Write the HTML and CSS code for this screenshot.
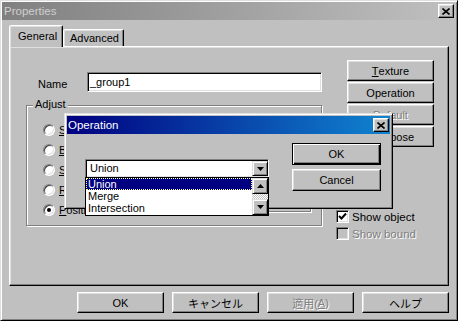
FILE: index.html
```html
<!DOCTYPE html>
<html lang="ja">
<head>
    <meta charset="UTF-8">
    <meta name="viewport" content="width=device-width, initial-scale=1.0">
    <title>Properties</title>
    <link rel="stylesheet" href="styles.css">
</head>
<body>

<div class="window">
    <div class="titlebar inactive">
        <span class="title">Properties</span>
        <span class="tbtn">
            <svg width="8" height="7" viewBox="0 0 8 7"><path d="M0.5 0.5 L7.5 6.5 M7.5 0.5 L0.5 6.5" stroke="#000" stroke-width="1.6" fill="none"/></svg>
        </span>
    </div>

    <div class="tabs">
        <div class="tab active">General</div>
        <div class="tab second">Advanced</div>
    </div>

    <div class="panel">
        <div class="col-left">
            <div class="name-row">
                <span class="name-label">Name</span>
                <div class="field name-field">_group1</div>
            </div>
            <div class="group adjust">
                <span class="legend">Adjust</span>
                <div class="radios">
                    <div class="radio-row"><span class="radio"></span><span><u>S</u>cale</span></div>
                    <div class="radio-row"><span class="radio"></span><span><u>B</u>end</span></div>
                    <div class="radio-row"><span class="radio"></span><span><u>S</u>hear</span></div>
                    <div class="radio-row"><span class="radio"></span><span><u>R</u>otate</span></div>
                    <div class="radio-row"><span class="radio checked"></span><span><u>P</u>osition</span></div>
                </div>
                <div class="group inner"></div>
            </div>
        </div>
        <div class="col-right">
            <button class="btn side"><u>T</u>exture</button>
            <button class="btn side">Operation</button>
            <button class="btn side disabled">Default</button>
            <button class="btn side">Compose</button>
            <div class="checks">
                <div class="check-row">
                    <span class="check">
                        <svg width="9" height="9" viewBox="0 0 9 9"><path d="M1 4 L3.5 6.5 L8 1.5" stroke="#000" stroke-width="2" fill="none"/></svg>
                    </span>
                    <span>Show object</span>
                </div>
                <div class="check-row disabled">
                    <span class="check off"></span>
                    <span>Show bound</span>
                </div>
            </div>
        </div>
    </div>

    <div class="footer">
        <button class="btn">OK</button>
        <button class="btn">キャンセル</button>
        <button class="btn disabled">適用(<u>A</u>)</button>
        <button class="btn">ヘルプ</button>
    </div>

    <!-- Operation dialog on top -->
    <div class="dialog">
        <div class="titlebar active">
            <span class="title">Operation</span>
            <span class="tbtn">
                <svg width="8" height="7" viewBox="0 0 8 7"><path d="M0.5 0.5 L7.5 6.5 M7.5 0.5 L0.5 6.5" stroke="#000" stroke-width="1.6" fill="none"/></svg>
            </span>
        </div>
        <div class="dialog-body">
            <div class="combo">
                <div class="field combo-field">
                    <span>Union</span>
                    <span class="arrow-btn">
                        <svg width="7" height="4" viewBox="0 0 7 4"><polygon points="0,0 7,0 3.5,4" fill="#000"/></svg>
                    </span>
                </div>
                <div class="droplist">
                    <div class="items">
                        <div class="item selected">Union</div>
                        <div class="item">Merge</div>
                        <div class="item">Intersection</div>
                    </div>
                    <div class="scrollbar">
                        <span class="arrow-btn sb">
                            <svg width="7" height="4" viewBox="0 0 7 4"><polygon points="0,4 7,4 3.5,0" fill="#000"/></svg>
                        </span>
                        <span class="track"></span>
                        <span class="arrow-btn sb">
                            <svg width="7" height="4" viewBox="0 0 7 4"><polygon points="0,0 7,0 3.5,4" fill="#000"/></svg>
                        </span>
                    </div>
                </div>
            </div>
            <div class="dialog-buttons">
                <button class="btn default">OK</button>
                <button class="btn">Cancel</button>
            </div>
        </div>
    </div>
</div>

</body>
</html>
```

FILE: styles.css
```css
* {
    box-sizing: border-box;
}
body {
    margin: 0;
    width: 458px;
    height: 321px;
    overflow: hidden;
    background-color: #c0c0c0;
    font-family: "Liberation Sans", "Noto Sans CJK JP", Arial, sans-serif;
    font-size: 11px;
    color: #000;
}
u {
    text-decoration: underline;
    text-underline-offset: 1px;
}
.window {
    position: relative;
    width: 458px;
    height: 321px;
    border: 1px solid;
    border-color: #dfdfdf #000 #000 #dfdfdf;
    padding: 1px;
    box-shadow: inset 1px 1px #fff, inset -1px -1px #808080;
    display: flex;
    flex-direction: column;
}
/* title bars */
.titlebar {
    height: 18px;
    flex: none;
    display: flex;
    align-items: center;
    justify-content: space-between;
    padding: 0 2px 0 2px;
}
.titlebar.inactive {
    background: linear-gradient(to right, #808080, #c0c0c0);
    color: #d0d0d0;
}
.titlebar.active {
    background: linear-gradient(to right, #000080, #1084d0);
    color: #fff;
    padding: 0 1px 0 1px;
}
.title {
    font-size: 11.5px;
}
.tbtn {
    width: 16px;
    height: 14px;
    background-color: #c0c0c0;
    border: 1px solid;
    border-color: #fff #000 #000 #fff;
    box-shadow: inset -1px -1px #808080, inset 1px 1px #dfdfdf;
    display: flex;
    align-items: center;
    justify-content: center;
}
/* tabs */
.tabs {
    height: 26px;
    flex: none;
    display: flex;
    align-items: flex-end;
    padding-left: 7px;
}
.tab {
    height: 17px;
    width: 61px;
    padding-left: 6px;
    border: 1px solid;
    border-bottom: none;
    border-color: #fff #000 transparent #fff;
    border-radius: 2px 2px 0 0;
    box-shadow: inset -1px 0 #808080, inset 1px 1px #dfdfdf;
    background-color: #c0c0c0;
    display: flex;
    align-items: center;
}
.tab.active {
    width: 54px;
    height: 22px;
    margin-bottom: -1px;
    padding-left: 8px;
    padding-bottom: 1px;
    position: relative;
    z-index: 1;
}
/* main panel */
.panel {
    height: 240px;
    flex: none;
    margin: 0 7px;
    border: 1px solid;
    border-color: #fff #000 #000 #fff;
    box-shadow: inset -1px -1px #808080, inset 1px 1px #dfdfdf;
    display: flex;
    padding: 0 14px 0 16px;
    gap: 14px;
}
.col-left {
    width: 296px;
}
.col-right {
    width: 98px;
    padding-top: 13px;
    display: flex;
    flex-direction: column;
    gap: 1px;
}
.name-row {
    margin-top: 25px;
    padding-left: 12px;
    display: flex;
    align-items: center;
}
.name-label {
    width: 49px;
    padding-top: 3px;
}
.field {
    background-color: #fff;
    border: 1px solid;
    border-color: #808080 #fff #fff #808080;
    box-shadow: inset 1px 1px #000, inset -1px -1px #dfdfdf;
}
.name-field {
    width: 235px;
    height: 20px;
    padding: 3px 2px 0;
}
.group {
    border: 1px solid #808080;
    box-shadow: inset 1px 1px #fff, 1px 1px #fff;
}
.adjust {
    position: relative;
    margin-top: 13px;
    height: 121px;
    padding: 14px 10px 0 16px;
    display: flex;
}
.legend {
    position: absolute;
    top: -8px;
    left: 6px;
    padding: 0 2px;
    background-color: #c0c0c0;
}
.radios {
    display: flex;
    flex-direction: column;
}
.radio-row {
    height: 20px;
    display: flex;
    align-items: center;
    gap: 4px;
}
.radio {
    position: relative;
    width: 12px;
    height: 12px;
    border-radius: 50%;
    background-color: #fff;
    border: 1px solid;
    border-color: #808080 #fff #fff #808080;
    box-shadow: inset 1px 1px #404040, inset -1px -1px #dfdfdf;
}
.radio.checked::after {
    content: "";
    position: absolute;
    left: 3px;
    top: 3px;
    width: 4px;
    height: 4px;
    border-radius: 50%;
    background-color: #000;
}
.inner {
    margin-left: auto;
    width: 160px;
    height: 92px;
}
/* buttons */
.btn {
    width: 87px;
    height: 21px;
    padding: 0;
    font: inherit;
    color: #000;
    background-color: #c0c0c0;
    border: 1px solid;
    border-color: #fff #000 #000 #fff;
    box-shadow: inset -1px -1px #808080, inset 1px 1px #dfdfdf;
    display: flex;
    align-items: center;
    justify-content: center;
}
.btn.side {
    margin-left: 11px;
}
.btn.disabled,
.check-row.disabled {
    color: #808080;
    text-shadow: 1px 1px #fff;
}
.btn.default {
    border-color: #000;
    box-shadow: inset 1px 1px #fff, inset -1px -1px #000, inset -2px -2px #808080;
}
.checks {
    margin-top: 60px;
}
.check-row {
    height: 17px;
    display: flex;
    align-items: center;
    gap: 3px;
    font-size: 11.5px;
}
.check {
    width: 13px;
    height: 13px;
    background-color: #fff;
    border: 1px solid;
    border-color: #808080 #fff #fff #808080;
    box-shadow: inset 1px 1px #000, inset -1px -1px #dfdfdf;
    display: flex;
    align-items: center;
    justify-content: center;
}
.check.off {
    background-color: #c0c0c0;
}
.footer {
    flex: 1;
    display: flex;
    justify-content: flex-end;
    gap: 8px;
    padding: 6px 7px 0 0;
}
/* Operation dialog */
.dialog {
    position: absolute;
    left: 63px;
    top: 112px;
    width: 329px;
    height: 96px;
    background-color: #c0c0c0;
    border: 1px solid;
    border-color: #dfdfdf #000 #000 #dfdfdf;
    padding: 2px;
    box-shadow: inset 1px 1px #fff, inset -1px -1px #808080;
    z-index: 5;
}
.dialog-body {
    display: flex;
    padding: 0 9px 0 18px;
    gap: 23px;
}
.combo {
    position: relative;
    margin-top: 25px;
    width: 184px;
}
.combo-field {
    height: 19px;
    padding: 2px 0 0 4px;
    display: flex;
    justify-content: space-between;
}
.arrow-btn {
    width: 16px;
    height: 15px;
    background-color: #c0c0c0;
    border: 1px solid;
    border-color: #dfdfdf #000 #000 #dfdfdf;
    box-shadow: inset 1px 1px #fff, inset -1px -1px #808080;
    display: flex;
    align-items: center;
    justify-content: center;
}
.combo-field .arrow-btn {
    margin-top: -1px;
}
.droplist {
    position: absolute;
    top: 18px;
    left: 0;
    width: 184px;
    height: 39px;
    background-color: #fff;
    border: 1px solid #000;
    display: flex;
}
.items {
    flex: 1;
}
.item {
    height: 12px;
    line-height: 12px;
    padding-left: 2px;
}
.item.selected {
    background-color: #000080;
    color: #fff;
    outline: 1px dotted #ffff9c;
    outline-offset: -1px;
}
.scrollbar {
    width: 16px;
    display: flex;
    flex-direction: column;
}
.arrow-btn.sb {
    height: 16px;
}
.track {
    flex: 1;
    background: repeating-conic-gradient(#fff 0 25%, #c0c0c0 0 50%) 0 0 / 2px 2px;
}
.dialog-buttons {
    margin-top: 9px;
    display: flex;
    flex-direction: column;
    gap: 4px;
}
.dialog-buttons .btn {
    width: 89px;
    height: 22px;
}
```
